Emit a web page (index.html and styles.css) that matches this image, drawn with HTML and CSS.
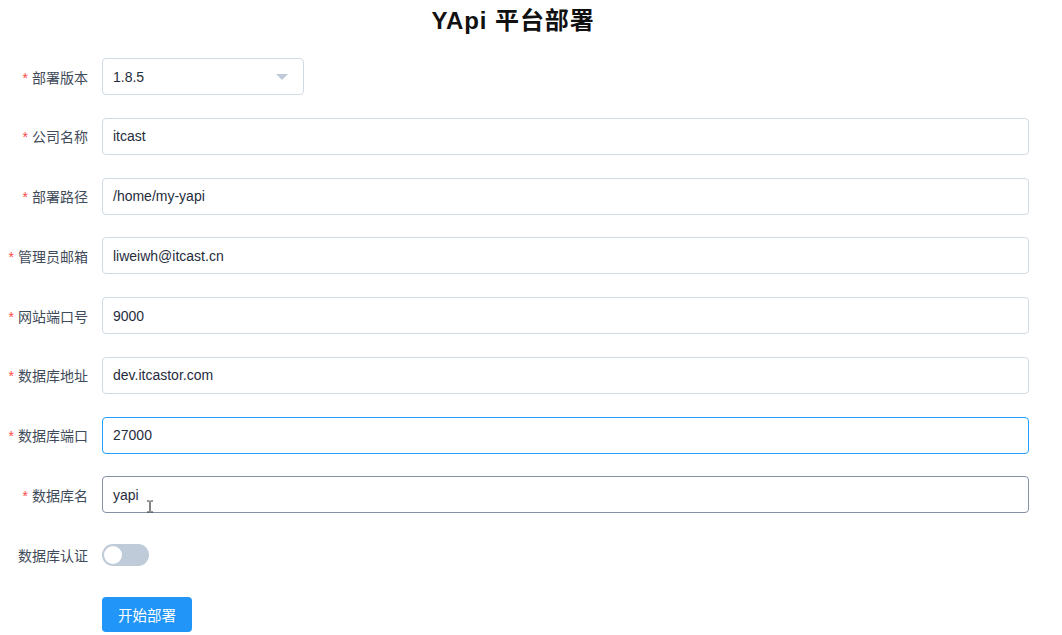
FILE: index.html
```html
<!DOCTYPE html>
<html lang="zh">
<head>
<meta charset="utf-8">
<title>YApi 平台部署</title>
<link rel="stylesheet" href="styles.css">
</head>
<body>
<div class="page">
  <h1 class="title">YApi 平台部署</h1>
  <form class="form">
    <div class="row">
      <label class="label"><span class="req">*</span>部署版本</label>
      <div class="select">
        <span class="value">1.8.5</span>
        <span class="arrow"></span>
      </div>
    </div>
    <div class="row">
      <label class="label"><span class="req">*</span>公司名称</label>
      <div class="input">itcast</div>
    </div>
    <div class="row">
      <label class="label"><span class="req">*</span>部署路径</label>
      <div class="input">/home/my-yapi</div>
    </div>
    <div class="row">
      <label class="label"><span class="req">*</span>管理员邮箱</label>
      <div class="input">liweiwh@itcast.cn</div>
    </div>
    <div class="row">
      <label class="label"><span class="req">*</span>网站端口号</label>
      <div class="input">9000</div>
    </div>
    <div class="row">
      <label class="label"><span class="req">*</span>数据库地址</label>
      <div class="input">dev.itcastor.com</div>
    </div>
    <div class="row">
      <label class="label"><span class="req">*</span>数据库端口</label>
      <div class="input focus">27000</div>
    </div>
    <div class="row">
      <label class="label"><span class="req">*</span>数据库名</label>
      <div class="input hover">yapi
        <svg class="cursor" width="8" height="13" viewBox="0 0 8 13"><path d="M1 1h2.5M4.5 1H7M4 1.5v10M1 12h2.5M4.5 12H7" stroke="#333" stroke-width="1.2" fill="none"/></svg>
      </div>
    </div>
    <div class="row">
      <label class="label">数据库认证</label>
      <div class="switch"><span class="knob"></span></div>
    </div>
    <div class="row">
      <span class="label"></span>
      <button type="button" class="btn">开始部署</button>
    </div>
  </form>
</div>
</body>
</html>
```
FILE: styles.css
```css
html, body {
  margin: 0;
  padding: 0;
  background: #fff;
}
.page {
  width: 1062px;
  font-family: "Liberation Sans", "Noto Sans CJK SC", sans-serif;
}
.title {
  margin: 0;
  padding-right: 36px;
  text-align: center;
  font-size: 24px;
  line-height: 42px;
  font-weight: bold;
  letter-spacing: 0.9px;
  color: #111;
}
.form {
  margin-top: 16px;
  padding-right: 33px;
  display: flex;
  flex-direction: column;
  gap: 22.75px;
}
.row {
  display: flex;
  align-items: center;
  height: 37px;
}
.label {
  flex: 0 0 102px;
  box-sizing: border-box;
  padding-right: 14px;
  text-align: right;
  font-size: 14px;
  color: #3f4b5a;
  white-space: nowrap;
}
.req {
  color: #ff4949;
  margin-right: 4px;
}
.input, .select {
  position: relative;
  box-sizing: border-box;
  height: 37px;
  border: 1px solid #d1dbe5;
  border-radius: 4px;
  padding: 0 10px;
  display: flex;
  align-items: center;
  font-size: 14px;
  color: #1f2d3d;
  background: #fff;
}
.input {
  flex: 1;
}
.select {
  width: 202px;
  justify-content: space-between;
}
.arrow {
  width: 0;
  height: 0;
  border-left: 6px solid transparent;
  border-right: 6px solid transparent;
  border-top: 6px solid #bfcbd9;
  margin-right: 5px;
}
.input.focus {
  border-color: #20a0ff;
}
.input.hover {
  border-color: #8391a5;
}
.cursor {
  position: absolute;
  left: 43px;
  top: 23px;
}
.switch {
  position: relative;
  width: 47px;
  height: 22px;
  border-radius: 11px;
  background: #bfcbd9;
}
.knob {
  position: absolute;
  left: 2px;
  top: 2px;
  width: 18px;
  height: 18px;
  border-radius: 50%;
  background: #fff;
}
.btn {
  width: 90px;
  height: 35px;
  border: none;
  border-radius: 4px;
  background: #2196f8;
  color: #fff;
  font-size: 14.5px;
  font-family: "Liberation Sans", "Noto Sans CJK SC", sans-serif;
  padding: 0;
}
```
